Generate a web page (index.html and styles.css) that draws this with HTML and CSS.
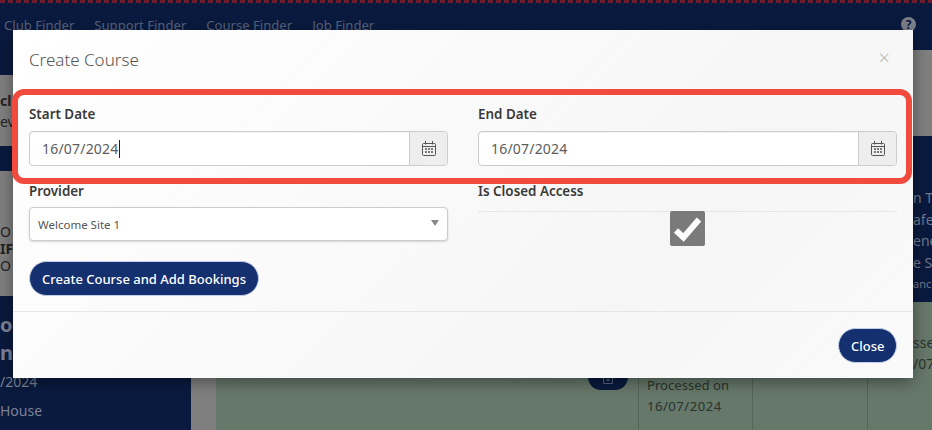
FILE: index.html
```html
<!DOCTYPE html>
<html lang="en">
<head>
    <meta charset="UTF-8">
    <meta name="viewport" content="width=device-width, initial-scale=1.0">
    <title>Create Course</title>
    <link rel="stylesheet" href="styles.css">
</head>
<body>
    <div class="page">
        <div class="dash-line"></div>
        <div class="topbar">
            <nav class="topnav">
                <a>Club Finder</a>
                <a>Support Finder</a>
                <a>Course Finder</a>
                <a>Job Finder</a>
            </nav>
            <span class="help">?</span>
        </div>
        <div class="content">
            <div class="side-left">
                <div class="strip-navy-a"></div>
                <div class="strip-grey-a">
                    <div class="cut-text"><b>cl</b></div>
                    <div class="cut-text">ev</div>
                </div>
                <div class="strip-navy-b"></div>
                <div class="strip-grey-b">
                    <div class="cut-text">O</div>
                    <div class="cut-text"><b>IF</b></div>
                    <div class="cut-text">O</div>
                </div>
                <div class="strip-bottom">
                    <div class="school-card">
                        <div class="cut-text big">ol</div>
                        <div class="cut-text big">n</div>
                        <div class="cut-text date">/2024</div>
                        <div class="cut-text">House</div>
                    </div>
                </div>
            </div>
            <div class="main-area">
                <div class="row-btn">
                    <span class="doc-btn">
                        <svg width="12" height="12" viewBox="0 0 12 12" fill="none" stroke="#56617c" stroke-width="1">
                            <path d="M1.5 1.5h9v9h-9zM4 7.5h4M6 3v4"/>
                        </svg>
                    </span>
                </div>
                <div class="table-cols">
                    <div class="col-a"></div>
                    <div class="col-b">Processed on<br><span class="col-date">16/07/2024</span></div>
                    <div class="col-c"></div>
                    <div class="col-d"></div>
                </div>
            </div>
            <div class="side-right">
                <div class="strip-grey-c"></div>
                <div class="strip-navy-c">
                    <div>n T</div>
                    <div>afeg</div>
                    <div>ene</div>
                    <div>e Sl</div>
                    <div class="small">anc</div>
                </div>
                <div class="strip-green">
                    <div>sse<br>/07</div>
                </div>
            </div>
        </div>
    </div>

    <div class="modal">
        <div class="modal-header">
            <h4>Create Course</h4>
            <span class="modal-close">&times;</span>
        </div>
        <div class="modal-body">
            <div class="form-row row-dates">
                <div class="form-col">
                    <label>Start Date</label>
                    <div class="input-group">
                        <div class="input-text">16/07/2024<span class="caret"></span></div>
                        <span class="input-addon">
                            <svg width="16" height="17" viewBox="0 0 16 17" fill="none" stroke="#555" stroke-width="1">
                                <rect x="1.5" y="3.5" width="13" height="12" rx="1"/>
                                <path d="M1.5 6.5h13M4.5 1v3.5M11.5 1v3.5"/>
                                <path d="M4 9h2M7 9h2M10 9h2M4 12h2M7 12h2M10 12h2" stroke-width="1.6"/>
                            </svg>
                        </span>
                    </div>
                </div>
                <div class="form-col">
                    <label>End Date</label>
                    <div class="input-group">
                        <div class="input-text">16/07/2024</div>
                        <span class="input-addon">
                            <svg width="16" height="17" viewBox="0 0 16 17" fill="none" stroke="#555" stroke-width="1">
                                <rect x="1.5" y="3.5" width="13" height="12" rx="1"/>
                                <path d="M1.5 6.5h13M4.5 1v3.5M11.5 1v3.5"/>
                                <path d="M4 9h2M7 9h2M10 9h2M4 12h2M7 12h2M10 12h2" stroke-width="1.6"/>
                            </svg>
                        </span>
                    </div>
                </div>
            </div>
            <div class="form-row row-provider">
                <div class="form-col">
                    <label>Provider</label>
                    <div class="select-box">
                        <span>Welcome Site 1</span>
                        <span class="select-arrow"></span>
                    </div>
                </div>
                <div class="form-col">
                    <label>Is Closed Access</label>
                    <div class="check-wrap">
                        <span class="check-box">
                            <svg width="35" height="35" viewBox="0 0 35 35" fill="none" stroke="#fff" stroke-width="6">
                                <path d="M6 19.5l7.5 7L29 8.5"/>
                            </svg>
                        </span>
                    </div>
                </div>
            </div>
            <button class="btn btn-create">Create Course and Add Bookings</button>
        </div>
        <div class="modal-footer">
            <button class="btn btn-close">Close</button>
        </div>
    </div>

    <div class="highlight"></div>
</body>
</html>
```

FILE: styles.css
```css
* {
    box-sizing: border-box;
}
html, body {
    margin: 0;
    padding: 0;
    height: 430px;
    overflow: hidden;
}
body {
    font-family: "Noto Sans", Arial, sans-serif;
    font-size: 14px;
    color: #333;
    position: relative;
    background: #7f7f7f;
}

/* page behind the modal */
.page {
    height: 430px;
    display: flex;
    flex-direction: column;
    overflow: hidden;
}
.dash-line {
    height: 3px;
    background: repeating-linear-gradient(90deg, #6d1a2c 0 5px, #0a1a3e 5px 8px);
}
.topbar {
    height: 47px;
    background: #0a1a3e;
    display: flex;
    justify-content: space-between;
    padding: 13px 16px 0 4px;
}
.topnav {
    display: flex;
    gap: 20px;
    color: #56617c;
    font-size: 13.1px;
    line-height: 19px;
}
.help {
    width: 15px;
    height: 15px;
    margin-top: 1px;
    border-radius: 50%;
    background: #7b7f88;
    color: #0a1a3e;
    font-size: 12px;
    font-weight: 700;
    line-height: 15px;
    text-align: center;
}
.content {
    flex: 1;
    display: flex;
}
.side-left {
    width: 216px;
    display: flex;
    flex-direction: column;
}
.cut-text {
    white-space: nowrap;
}
.strip-navy-a {
    height: 25px;
    background: #0a1a3e;
}
.strip-grey-a {
    height: 71px;
    background: #7f7f7f;
    color: #222;
    padding-top: 15px;
}
.strip-grey-a .cut-text {
    line-height: 21px;
}
.strip-navy-b {
    height: 25px;
    background: #0a1a3e;
}
.strip-grey-b {
    height: 125px;
    background: #7f7f7f;
    color: #222;
    padding-top: 52px;
}
.strip-grey-b .cut-text {
    line-height: 17px;
}
.strip-bottom {
    flex: 1;
    padding-right: 25px;
    background: #7f7f7f;
}
.school-card {
    height: 100%;
    background: #0a1a3e;
    color: #7b8296;
    padding-top: 15px;
}
.school-card .big {
    font-size: 20px;
    font-weight: 700;
    line-height: 29px;
}
.school-card .cut-text {
    line-height: 28px;
}
.school-card .date {
    padding-top: 1px;
    margin-bottom: 1px;
}
.main-area {
    flex: 1;
    background: #66786a;
    display: flex;
    flex-direction: column;
    justify-content: flex-end;
    color: #2a332c;
}
.row-btn {
    height: 0;
    padding-left: 372px;
}
.doc-btn {
    display: flex;
    justify-content: center;
    align-items: flex-end;
    width: 40px;
    height: 27px;
    margin-top: 3px;
    padding-bottom: 5px;
    border-radius: 13px;
    background: #0a1a3e;
}
.table-cols {
    height: 70px;
    display: flex;
}
.col-a {
    width: 422px;
}
.col-b, .col-c {
    width: 115px;
    border-left: 1px solid #566559;
}
.col-b {
    width: 114px;
    padding: 15px 8px 0;
    font-size: 13.1px;
    line-height: 21px;
    white-space: nowrap;
}
.col-date {
    letter-spacing: 0.5px;
}
.col-d {
    flex: 1;
    border-left: 1px solid #566559;
}
.side-right {
    width: 19px;
    display: flex;
    flex-direction: column;
    overflow: hidden;
    white-space: nowrap;
}
.strip-grey-c {
    height: 86px;
    background: #7f7f7f;
}
.strip-navy-c {
    height: 166px;
    background: #0a1a3e;
    color: #6f7789;
    padding-top: 51px;
    line-height: 21.5px;
}
.strip-navy-c .small {
    font-size: 11px;
}
.strip-green {
    flex: 1;
    background: #66786a;
    color: #2a332c;
    line-height: 21px;
    padding-top: 30px;
}

/* modal */
.modal {
    position: absolute;
    left: 13px;
    top: 30px;
    width: 900px;
    height: 348px;
    background: linear-gradient(135deg, #fff 0%, #f6f6f6 70%, #fafafa 100%);
    box-shadow: 0 4px 14px rgba(0, 0, 0, 0.4);
    display: flex;
    flex-direction: column;
}
.modal-header {
    height: 60px;
    padding: 17px 16px 0;
    display: flex;
    justify-content: space-between;
}
.modal-header h4 {
    margin: 0;
    font-size: 17px;
    font-weight: 300;
    line-height: 26px;
    color: #555;
}
.modal-close {
    font-size: 20px;
    line-height: 22px;
    color: #bbb;
    font-weight: 300;
    margin-right: 7px;
}
.modal-body {
    height: 222px;
    padding: 16px 16px 0;
    border-bottom: 1px solid #e6e6e6;
}
.form-row {
    display: flex;
    gap: 30px;
}
.form-col {
    flex: 1;
    min-width: 0;
}
.form-col label {
    display: block;
    font-size: 13.4px;
    font-weight: 600;
    line-height: 17px;
    color: #3a3a3a;
    margin-bottom: 8px;
}
.row-dates {
    height: 77px;
}
.input-group {
    display: flex;
    height: 35px;
    border: 1px solid #ccc;
    border-radius: 4px;
    background: #fff;
    box-shadow: inset 0 1px 1px rgba(0, 0, 0, 0.05);
}
.input-text {
    flex: 1;
    padding-left: 12px;
    font-size: 14px;
    line-height: 32px;
    letter-spacing: 0.2px;
    color: #5c5c5c;
    display: flex;
    align-items: center;
}
.caret {
    width: 1px;
    height: 18px;
    background: #222;
    margin-left: 1px;
}
.input-addon {
    width: 38px;
    background: #eee;
    border-left: 1px solid #ccc;
    border-radius: 0 4px 4px 0;
    display: flex;
    align-items: center;
    justify-content: center;
}
.select-box {
    height: 34px;
    margin-top: -1px;
    padding: 0 8px;
    border: 1px solid #ccc;
    border-radius: 4px;
    background: #fff;
    box-shadow: 0 1px 2px rgba(0, 0, 0, 0.15);
    font-size: 11.5px;
    color: #555;
    display: flex;
    align-items: center;
    justify-content: space-between;
}
.select-arrow {
    width: 0;
    height: 0;
    margin-top: -3px;
    border-left: 4px solid transparent;
    border-right: 4px solid transparent;
    border-top: 6px solid #888;
}
.check-wrap {
    display: flex;
    justify-content: center;
    border-top: 1px solid #e6e6e6;
    margin-top: 11px;
}
.check-box {
    width: 35px;
    height: 35px;
    margin-top: -1px;
    background: #7a7a7a;
    border-radius: 2px;
    display: flex;
    align-items: center;
    justify-content: center;
}
.row-provider {
    height: 78px;
}
.btn {
    height: 35px;
    border: 1px solid #c5d0e6;
    border-radius: 18px;
    background: #14306f;
    color: #fff;
    font-family: "Noto Sans", Arial, sans-serif;
    font-size: 13px;
    font-weight: 500;
    padding: 0 12px;
    display: block;
}
.btn-create {
    width: 230px;
    white-space: nowrap;
}
.modal-footer {
    flex: 1;
    display: flex;
    justify-content: flex-end;
    padding: 16px 16px 0;
}
.btn-close {
    width: 59px;
    height: 35px;
}

/* red box drawn over the screenshot */
.highlight {
    position: absolute;
    left: 12px;
    top: 89px;
    width: 900px;
    height: 95px;
    border: 6px solid #f04b3d;
    border-radius: 12px;
}
```
